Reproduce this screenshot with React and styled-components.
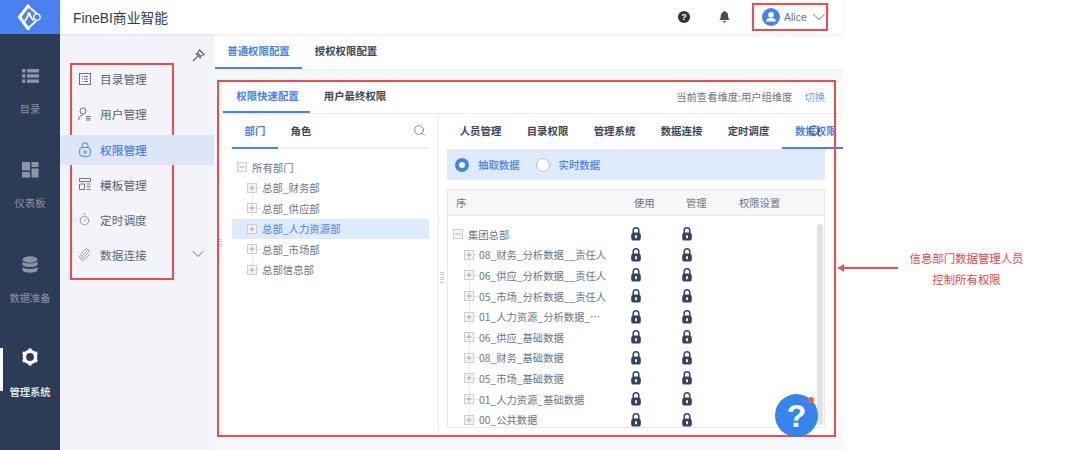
import React from "react";
import styled, { createGlobalStyle } from "styled-components";
import { ChevronDown, Paperclip, Timer, Search, Plus, Minus } from "lucide-react";

const Global = createGlobalStyle`
  html, body { margin: 0; padding: 0; background: #fff; }
  body { font-family: "Noto Sans CJK SC", "Noto Sans", sans-serif; }
  * { box-sizing: border-box; }
`;
const Page = styled.div`display: flex; width: 1080px; height: 450px; overflow: hidden; background: #fff;`;
const App_ = styled.div`display: flex; width: 843px; height: 450px; flex: none;`;
const Rail = styled.nav`width: 60px; flex: none; background: #2c3c56; display: flex; flex-direction: column;`;
const Logo = styled.div`height: 34px; background: #4a80f0; display: flex; align-items: center; justify-content: center;`;
const RailList = styled.div`display: flex; flex-direction: column; padding-top: 23px;`;
const RailItem = styled.div`
  height: 94.3px; display: flex; flex-direction: column; align-items: center; position: relative;
  padding-top: ${p => p.$active ? 7 : 9}px; gap: ${p => p.$active ? 18 : 16}px; font-size: 10.3px; line-height: 14px; color: ${p => p.$active ? "#f2f4f8" : "#8a95a5"};
  font-weight: ${p => p.$active ? 500 : 400};
  svg { height: 20px; }
  &::before { content: ""; display: ${p => p.$active ? "block" : "none"}; position: absolute; left: 0; top: 8px; width: 3px; height: 43px; background: #fff; }
`;
const Body = styled.div`flex: 1; display: flex; flex-direction: column; min-width: 0;`;
const Header = styled.header`
  height: 34px; flex: none; display: flex; align-items: center; background: #fff; padding: 0 15px 0 13px;
  box-shadow: 0 1px 3px rgba(40,50,70,.1); position: relative; z-index: 2; color: #2e3a4e;
`;
const Title = styled.div`font-size: 13.8px; flex: 1; font-family: "Liberation Sans", "Noto Sans CJK SC", sans-serif; color: #333c4c;`;
const HeadIcon = styled.div`display: flex; margin-right: ${p => p.$mr}px;`;
const UserBox = styled.div`
  width: 76px; height: 28px; border: 2px solid #f04a4e; display: flex; align-items: center; padding-left: 8px; gap: 4px;
  font-size: 10.5px; font-family: "Liberation Sans", sans-serif; color: #6b7482;
  svg { flex: none; }
  svg:last-child { margin-left: -3px; }
`;
const Content = styled.div`flex: 1; display: flex; min-height: 0;`;
const Side = styled.aside`width: 154px; flex: none; background: #f2f4f9; display: flex; flex-direction: column; position: relative;`;
const PinRow = styled.div`height: 29px; display: flex; justify-content: flex-end; align-items: flex-end; padding: 0 9px 1px 0; color: #4a5568;`;
const MenuFrame = styled.div`margin-left: 10px; width: 104px; height: 217px; border: 2px solid #f04a4e;`;
const MenuList = styled.div`margin: -1px 0 0 -12px; width: 154px; display: flex; flex-direction: column;`;
const MenuRow = styled.div`
  height: 30px; margin-bottom: 5.3px; padding: 0 0 1px 18px; display: flex; align-items: center; gap: 9px; font-size: 11.7px;
  color: ${p => p.$active ? "#4a80f0" : "#5d6674"}; font-weight: ${p => p.$active ? 500 : 400};
  background: ${p => p.$active ? "#dce6f7" : "transparent"};
  position: relative;
`;
const MenuIcon = styled.span`width: 13px; flex: none; display: flex; justify-content: center;`;
const MenuChevron = styled.span`position: absolute; right: 6px; top: 4px; display: flex; color: #5d6674;`;
const Main = styled.main`flex: 1; display: flex; flex-direction: column; background: #f6f7f9; padding-left: 1px; min-width: 0;`;
const TopTabs = styled.div`height: 36px; flex: none; background: #fff; display: flex; border-bottom: 1px solid #eceef2;`;
const Tab = styled.div`
  width: ${p => p.$w}px; flex: none; display: flex; align-items: center; justify-content: center; font-size: 10.4px; font-weight: 700;
  color: ${p => p.$active ? "#4a80f0" : "#3c4656"};
  border-bottom: 2px solid ${p => p.$active ? "#4a80f0" : "transparent"};
`;
const Card = styled.section`margin: 10px 0 0 2px; height: 357px; background: #fff; position: relative; display: flex; flex-direction: column;`;
const Frame = styled.div`position: absolute; left: 0; top: 0; width: 619px; height: 357px; border: 2px solid #f04a4e; pointer-events: none; z-index: 3;`;
const CardTop = styled.div`height: 34px; flex: none; margin-left: 6px; display: flex; border-bottom: 1px solid #e8eaee; align-items: stretch; padding-right: 17px;`;
const CardTab = styled(Tab)`padding-left: 2px;`;
const Dim = styled.div`margin-left: auto; display: flex; align-items: center; gap: 12px; font-size: 10.3px; color: #6b7482; padding-right: 1px;`;
const Link = styled.span`color: #6f9ff0;`;
const Cols = styled.div`flex: 1; display: flex; min-height: 0;`;
const Left = styled.div`width: 222px; flex: none; padding: 0 9px 0 15px; border-right: 1px solid #e8eaee; position: relative;`;
const Right = styled.div`flex: 1; min-width: 0; padding-left: 8px; position: relative; overflow: hidden;`;
const SubTabs = styled.div`height: 35px; display: flex; border-bottom: 2px solid #f1f2f5; align-items: stretch; position: relative;`;
const SubTab = styled.div`
  width: ${p => p.$w}px; flex: none; display: flex; align-items: center; justify-content: center; font-size: 10.4px; font-weight: 700;
  margin-bottom: -2px; color: ${p => p.$active ? "#4a80f0" : "#3c4656"};
  border-bottom: 2px solid ${p => p.$active ? "#4a80f0" : "transparent"};
`;
const RightTabs = styled.div`height: 35px; display: flex;`;
const RightTab = styled(SubTab)`
  width: ${p => p.$last ? 62 : 67}px; margin-bottom: 0;
  justify-content: ${p => p.$last ? "flex-start" : "center"}; padding-left: ${p => p.$last ? 13 : 0}px;
`;
const SearchSpot = styled.span`position: absolute; display: flex; top: ${p => p.$t}px; right: ${p => p.$r}px; color: ${p => p.$c || "#4a5568"}; z-index: 2;`;
const Tree = styled.div`padding-top: 8px; font-size: 10.4px; color: #6b7482;`;
const TreeRow = styled.div`
  height: 20.5px; display: flex; align-items: center; gap: 5px; padding-left: ${p => p.$ind}px;
  background: ${p => p.$sel ? "#deebfd" : "transparent"}; color: ${p => p.$sel ? "#4a80f0" : "#6b7482"}; white-space: nowrap;
`;
const Box = styled.span`
  width: 10px; height: 10px; flex: none; border: 1px solid #c9ced6; background: #f4f5f7; display: flex; align-items: center; justify-content: center; color: #5d6674; position: relative;
  &::after { content: ""; display: ${p => p.$open ? "none" : "block"}; position: absolute; left: 9px; top: 3.5px; width: 4px; border-top: 1px dashed #e2e4e8; }
  &::before { content: ""; display: ${p => p.$open || p.$end ? "none" : "block"}; position: absolute; left: 3.5px; top: 9px; height: 11px; border-left: 1px dashed #e6e8ec; }
`;
const Strip = styled.div`width: 378px; height: 31px; background: #deebfd; display: flex; align-items: center; padding-left: 8px; font-size: 10.4px; font-weight: 500; color: #4a80f0;`;
const Radio = styled.span`
  width: 14px; height: 14px; border-radius: 50%; flex: none; margin-right: 9px; background: #fff;
  border: ${p => p.$on ? "4px solid #3f85f0" : "1px solid #b9bfc9"};
`;
const RadioLabel = styled.span`margin-right: 16px;`;
const Table = styled.div`width: 378px; height: 239px; margin-top: 9px; border: 1px solid #e8eaee; position: relative; font-size: 10.3px; color: #6b7482;`;
const THead = styled.div`height: 26px; background: #f6f7f9; border-bottom: 1px solid #e8eaee; display: grid; grid-template-columns: 180px 51px 51px 1fr; align-items: center;`;
const TRows = styled.div`padding-top: 8px; height: 211px; overflow: hidden;`;
const TRow = styled.div`height: 20.6px; display: grid; grid-template-columns: 180px 51px 51px 1fr; align-items: center;`;
const Name = styled.div`display: flex; align-items: center; gap: 5px; padding-left: ${p => p.$ind}px; white-space: nowrap;`;
const HeadCell = styled.div`padding-left: ${p => p.$pl}px; white-space: nowrap;`;
const Bar = styled.div`position: absolute; right: 1px; top: 34px; width: 6px; bottom: 2px; border-radius: 3px; background: #e0e2e6;`;
const Help = styled.div`
  position: absolute; left: 327px; top: 204px; width: 43px; height: 43px; border-radius: 50%; background: #3585ef; color: #fff; z-index: 4;
  display: flex; align-items: center; justify-content: center; font: 700 32px/1 "Liberation Sans", sans-serif;
  &::after { content: ""; position: absolute; right: 4px; top: 3px; width: 6px; height: 6px; border-radius: 50%; background: #f25a5a; }
`;
const Grip = styled.span`
  position: absolute; left: ${p => p.$l}px; top: ${p => p.$t}px; width: 4px; height: ${p => p.$h}px; z-index: 2;
  background-image: radial-gradient(circle, #b0b5bd .6px, transparent .7px); background-size: 2px 2.5px;
`;
const Note = styled.aside`flex: 1; position: relative; display: flex; align-items: flex-start; padding-top: 248px; color: #e5484d;`;
const Arrow = styled.div`width: 60px; height: 2px; margin: 19px 0 0 -5px; background: #ee4a4e; position: relative; flex: none;
  &::before { content: ""; position: absolute; left: 0; top: -3px; border: 4px solid transparent; border-right: 6px solid #ee4a4e; border-left: 0; }
`;
const NoteText = styled.div`margin-left: 11px; width: 115px; text-align: center; font-size: 11.4px; line-height: 20.5px; white-space: nowrap;`;

const LogoIcon = () => (
  <svg width="26" height="26" viewBox="0 0 26 26" fill="none" stroke="#fff" strokeWidth="1.8" strokeLinecap="round">
    <path d="M11 2 L2.5 13 L11 24.5" strokeWidth="3" />
    <path d="M11 2 L19 9 M11 24.5 L19 17 M8 17 L12 10 L16 16" />
    <circle cx="20" cy="13" r="3.2" strokeWidth="1.3" />
    <g fill="#fff" stroke="none"><circle cx="11" cy="2.5" r="2"/><circle cx="11" cy="24" r="2"/><circle cx="3" cy="13" r="2"/><circle cx="12" cy="10" r="1.8"/></g>
  </svg>
);
const PinIcon = () => (
  <svg width="13" height="13" viewBox="0 0 13 13" fill="none" stroke="#4a5568" strokeWidth="1.1">
    <path d="M7.6 1 L12 5.4 L8.8 7.4 L5.6 4.2 Z" />
    <path d="M3.6 4.2 L8.8 9.4 M5.6 7.4 L1 12" />
  </svg>
);
const ListIcon = () => <svg width="17" height="20" viewBox="0 0 17 20" fill="#8a95a5"><rect x="0" y="3" width="3.5" height="3.5"/><rect x="5" y="3" width="12" height="3.5"/><rect x="0" y="8.2" width="3.5" height="3.5"/><rect x="5" y="8.2" width="12" height="3.5"/><rect x="0" y="13.4" width="3.5" height="3.5"/><rect x="5" y="13.4" width="12" height="3.5"/></svg>;
const BoardIcon = () => <svg width="17" height="20" viewBox="0 0 17 20" fill="#8a95a5"><rect x="0" y="2" width="8" height="8.5"/><rect x="9.5" y="2" width="7" height="5"/><rect x="0" y="12" width="8" height="5.5"/><rect x="9.5" y="8.5" width="7" height="9"/></svg>;
const DbIcon = () => <svg width="16" height="20" viewBox="0 0 16 20" fill="#8a95a5"><ellipse cx="8" cy="4.5" rx="7.5" ry="3.2"/><path d="M.5 6.5C2 9 14 9 15.5 6.5V10C14 12.5 2 12.5.5 10Z"/><path d="M.5 12C2 14.5 14 14.5 15.5 12V15.5C14 18.5 2 18.5.5 15.5Z"/></svg>;
const GearIcon = () => (
  <svg width="18" height="20" viewBox="0 0 18 20">
    <circle cx="9" cy="10" r="5.6" fill="none" stroke="#fff" strokeWidth="3.4"/>
    <path d="M7.4 1.5h3.2v2.5H7.4zM7.4 16h3.2v2.5H7.4zM1 7l1.6-2.7 2.2 1.2-1.6 2.8zM13.2 14.5l1.6-2.8 2.2 1.3-1.6 2.7zM1 13l2.2-1.3 1.6 2.8-2.2 1.2zM13.2 5.5l2.2-1.2L17 7l-2.2 1.3z" fill="#fff"/>
  </svg>
);
const m = { fill: "none", stroke: "#6b7482", strokeWidth: 1 };
const CatalogIcon = () => <svg width="12" height="12" viewBox="0 0 12 12" {...m}><rect x=".5" y=".5" width="11" height="11"/><path d="M3 3.5h1M5 3.5h4M3 6h1M5 6h4M3 8.5h1M5 8.5h4"/></svg>;
const UserIcon = () => <svg width="13" height="14" viewBox="0 0 13 14" {...m}><circle cx="5" cy="4" r="3"/><path d="M.7 13c0-3 1.7-5 4.3-5M8 9.5h4.5M8 11.3h4.5M8 13h4.5"/></svg>;
const LockLine = () => <svg width="12" height="15" viewBox="0 0 12 15" fill="none" stroke="#4a80f0"><rect x=".7" y="5.5" width="10.6" height="8.8" rx="2.5"/><path d="M3 5.5V3.8a3 3 0 0 1 6 0v1.7"/><circle cx="6" cy="10" r="1.2"/></svg>;
const TplIcon = () => <svg width="12" height="12" viewBox="0 0 12 12" {...m}><path d="M.5.5h11v3H.5zM.5 6h5v5.5h-5zM7.5 6H11.5M7.5 8.7H11.5M7.5 11.5H11.5"/></svg>;
const LockGlyph = styled.svg`margin-left: 3px;`;
const LockFill = () => <LockGlyph width="10" height="14" viewBox="0 0 10 14"><path d="M2.2 6V3.6a2.8 2.8 0 0 1 5.6 0V6" fill="none" stroke="#33435e" strokeWidth="1.5"/><rect x=".2" y="5.5" width="9.6" height="8" rx="2.6" fill="#33435e"/><rect x="4.1" y="8.2" width="1.8" height="3" fill="#fff"/></LockGlyph>;
const QIcon = () => <svg width="12" height="12" viewBox="0 0 12 12"><circle cx="6" cy="6" r="6" fill="#333"/><text x="6" y="9.3" textAnchor="middle" fontSize="9" fontWeight="700" fontFamily="Liberation Sans" fill="#fff">?</text></svg>;
const BellIcon = () => <svg width="11" height="12" viewBox="0 0 11 12" fill="#444c58"><path d="M5.5 0c.6 0 1 .4 1 1 2 .5 2.7 2 2.7 4 0 2 .5 3 1.6 4H.2c1.1-1 1.6-2 1.6-4 0-2 .7-3.5 2.7-4 0-.6.4-1 1-1zM4 10h3a1.5 1.5 0 0 1-3 0z"/></svg>;
const Avatar = () => <svg width="18" height="18" viewBox="0 0 18 18"><circle cx="9" cy="9" r="9" fill="#4a80f0"/><circle cx="9" cy="6.8" r="2.8" fill="#fff"/><path d="M4 13.5c0-2.5 2-3.5 5-3.500s5 1 5 3.500z" fill="#fff"/></svg>;

const rail = [["目录", <ListIcon />], ["仪表板", <BoardIcon />], ["数据准备", <DbIcon />], ["管理系统", <GearIcon />, true]];
const menu = [["目录管理", <CatalogIcon />], ["用户管理", <UserIcon />], ["权限管理", <LockLine />, true], ["模板管理", <TplIcon />], ["定时调度", <Timer size={13} strokeWidth={1.2} color="#6b7482" />], ["数据连接", <Paperclip size={13} strokeWidth={1.2} color="#6b7482" />]];
const depts = ["总部_财务部", "总部_供应部", "总部_人力资源部", "总部_市场部", "总部信息部"];
const rtabs = ["人员管理", "目录权限", "管理系统", "数据连接", "定时调度", "数据权限"];
const rows = ["08_财务_分析数据__责任人", "06_供应_分析数据__责任人", "05_市场_分析数据__责任人", "01_人力资源_分析数据_…", "06_供应_基础数据", "08_财务_基础数据", "05_市场_基础数据", "01_人力资源_基础数据", "00_公共数据"];

const Toggle = ({ open, end }) => <Box $open={open} $end={end}>{open ? <Minus size={8} strokeWidth={1.4} /> : <Plus size={8} strokeWidth={1.4} />}</Box>;

export default function App() {
  return (
    <Page>
      <Global />
      <App_>
        <Rail>
          <Logo><LogoIcon /></Logo>
          <RailList>
            {rail.map(([t, ic, a]) => <RailItem key={t} $active={a}>{ic}<span>{t}</span></RailItem>)}
          </RailList>
        </Rail>
        <Body>
          <Header>
            <Title>FineBI商业智能</Title>
            <HeadIcon $mr={29}><QIcon /></HeadIcon>
            <HeadIcon $mr={22}><BellIcon /></HeadIcon>
            <UserBox><Avatar /><span>Alice</span><ChevronDown size={22} strokeWidth={1} color="#6b7482" /></UserBox>
          </Header>
          <Content>
            <Side>
              <PinRow><PinIcon /></PinRow>
              <MenuFrame>
                <MenuList>
                  {menu.map(([t, ic, a]) => (
                    <MenuRow key={t} $active={a}><MenuIcon>{ic}</MenuIcon><span>{t}</span>
                      {t === "数据连接" && <MenuChevron><ChevronDown size={20} strokeWidth={1.1} /></MenuChevron>}
                    </MenuRow>
                  ))}
                </MenuList>
              </MenuFrame>
            </Side>
            <Main>
              <TopTabs>
                <Tab $w={87} $active>普通权限配置</Tab>
                <Tab $w={88}>授权权限配置</Tab>
              </TopTabs>
              <Card>
                <Frame />
                <CardTop>
                  <CardTab $w={87} $active>权限快速配置</CardTab>
                  <CardTab $w={88}>用户最终权限</CardTab>
                  <Dim><span>当前查看维度:用户组维度</span><Link>切换</Link></Dim>
                </CardTop>
                <Cols>
                  <Left>
                    <Grip $l={1} $t={124} $h={10} />
                    <SubTabs>
                      <SubTab $w={46} $active>部门</SubTab>
                      <SubTab $w={46}>角色</SubTab>
                      <SearchSpot $t={10} $r={3}><Search size={13} strokeWidth={1.2} /></SearchSpot>
                    </SubTabs>
                    <Tree>
                      <TreeRow $ind={5}><Toggle open /><span>所有部门</span></TreeRow>
                      {depts.map((d, i) => <TreeRow key={d} $ind={15} $sel={i === 2}><Toggle end={i === 4} /><span>{d}</span></TreeRow>)}
                    </Tree>
                  </Left>
                  <Right>
                    <Grip $l={1} $t={157} $h={12} />
                    <RightTabs>
                      {rtabs.map((t, i) => <RightTab key={t} $last={i === 5} $active={i === 5}>{t}</RightTab>)}
                    </RightTabs>
                    <SearchSpot $t={10} $r={21} $c="#2e3a4e"><Search size={14} strokeWidth={1.5} /></SearchSpot>
                    <Strip>
                      <Radio $on /><RadioLabel>抽取数据</RadioLabel>
                      <Radio /><RadioLabel>实时数据</RadioLabel>
                    </Strip>
                    <Table>
                      <THead>
                        <HeadCell $pl={8}>序</HeadCell>
                        <HeadCell $pl={6}>使用</HeadCell>
                        <HeadCell $pl={7}>管理</HeadCell>
                        <HeadCell $pl={9}>权限设置</HeadCell>
                      </THead>
                      <TRows>
                        <TRow><Name $ind={5}><Toggle open /><span>集团总部</span></Name><LockFill /><LockFill /></TRow>
                        {rows.map((r, i) => <TRow key={r}><Name $ind={16}><Toggle end={i === rows.length - 1} /><span>{r}</span></Name><LockFill /><LockFill /></TRow>)}
                      </TRows>
                      <Bar />
                      <Help>?</Help>
                    </Table>
                  </Right>
                </Cols>
              </Card>
            </Main>
          </Content>
        </Body>
      </App_>
      <Note>
        <Arrow />
        <NoteText>信息部门数据管理人员<br />控制所有权限</NoteText>
      </Note>
    </Page>
  );
}
